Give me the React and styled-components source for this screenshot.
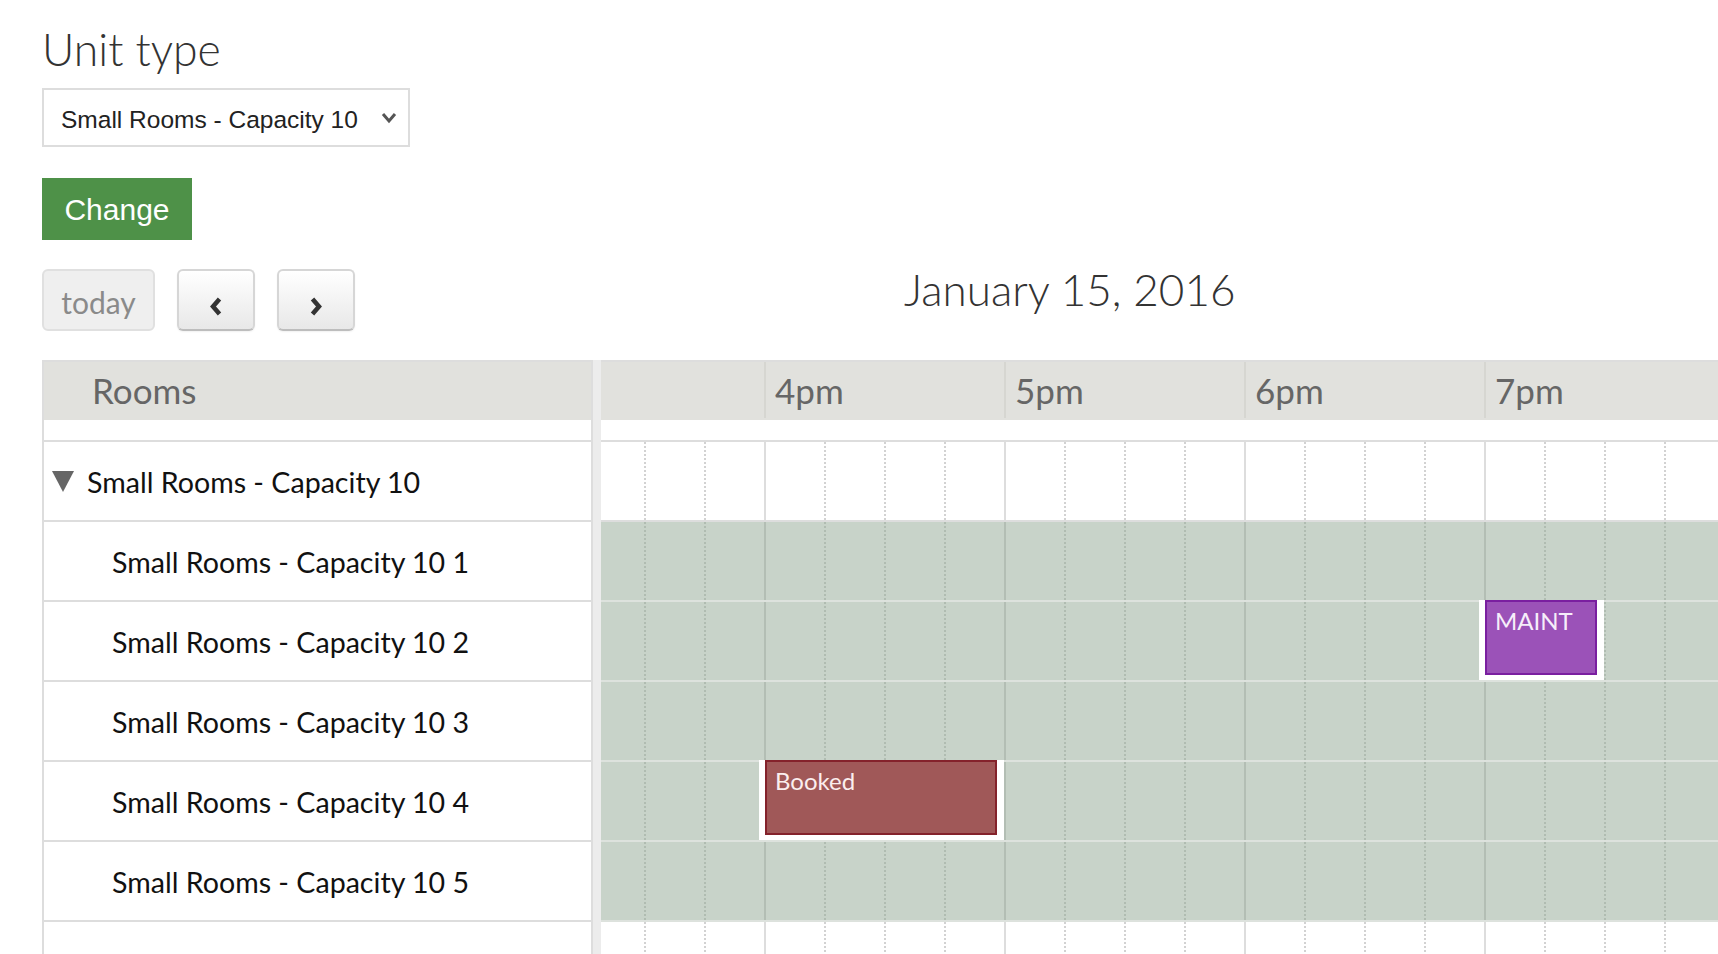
import React from "react";
import styled, { createGlobalStyle } from "styled-components";

const HOURS = [3, 4, 5, 6, 7, 8];
const LABELED = [4, 5, 6, 7];
const QUARTERS = [0, 1, 2, 3];
const HOUR_W = 240;
const TRACK_START = 15;

const ROOMS = [1, 2, 3, 4, 5].map((n) => `Small Rooms - Capacity 10 ${n}`);

const EVENTS = [
  { room: 2, title: "MAINT", start: 19, end: 19.5, kind: "maint" },
  { room: 4, title: "Booked", start: 16, end: 17, kind: "booked" },
];

const EVENT_COLORS = {
  maint: { bg: "#9b52b8", border: "#7a1fa0", text: "#f6eefa" },
  booked: { bg: "#a05858", border: "#84222b", text: "#fbeeee" },
};

export default function App() {
  return (
    <>
      <GlobalStyle />
      <Page>
        <Heading>Unit type</Heading>
        <Select>
          <span>Small Rooms - Capacity 10</span>
          <svg width="16" height="12" viewBox="0 0 16 12">
            <polyline points="2,2 8,9 14,2" fill="none" stroke="#555" strokeWidth="3" />
          </svg>
        </Select>
        <ChangeButton>Change</ChangeButton>

        <Toolbar>
          <ButtonGroup>
            <TodayButton>today</TodayButton>
            <NavButton>
              <svg width="12" height="19" viewBox="0 0 12 19">
                <polyline points="9.5,2 3,9.5 9.5,17" fill="none" stroke="#333" strokeWidth="4.5" />
              </svg>
            </NavButton>
            <NavButton>
              <svg width="12" height="19" viewBox="0 0 12 19">
                <polyline points="2.5,2 9,9.5 2.5,17" fill="none" stroke="#333" strokeWidth="4.5" />
              </svg>
            </NavButton>
          </ButtonGroup>
          <Title>January 15, 2016</Title>
        </Toolbar>

        <Scheduler>
          <RoomsPane>
            <RoomsHeader>Rooms</RoomsHeader>
            <Spacer />
            <GroupRow>
              <svg width="22" height="21" viewBox="0 0 22 21">
                <polygon points="0,0 22,0 11,21" fill="#666" />
              </svg>
              Small Rooms - Capacity 10
            </GroupRow>
            {ROOMS.map((r) => (
              <RoomRow key={r}>{r}</RoomRow>
            ))}
            <RoomRow />
          </RoomsPane>

          <Divider />

          <TimePane>
            <Track>
              <TimeHeader>
                {HOURS.map((h) => (
                  <HourCell key={h}>{LABELED.includes(h) ? `${h}pm` : ""}</HourCell>
                ))}
              </TimeHeader>
              <Spacer />
              <TimeRow>
                <Slots />
              </TimeRow>
              {ROOMS.map((r, i) => (
                <TimeRow key={r} $shaded>
                  <Slots shaded />
                  {EVENTS.filter((e) => e.room === i + 1).map((e) => (
                    <Harness
                      key={e.title}
                      style={{
                        left: (e.start - TRACK_START) * HOUR_W - 5,
                        width: (e.end - e.start) * HOUR_W + 5,
                      }}
                    >
                      <Event $kind={e.kind}>{e.title}</Event>
                    </Harness>
                  ))}
                </TimeRow>
              ))}
              <TimeRow>
                <Slots />
              </TimeRow>
            </Track>
          </TimePane>
        </Scheduler>
      </Page>
    </>
  );
}

function Slots({ shaded }) {
  return HOURS.map((h) =>
    QUARTERS.map((q) => <Slot key={`${h}-${q}`} $hour={q === 0} $shaded={shaded} />)
  );
}

const GlobalStyle = createGlobalStyle`
  html, body {
    margin: 0;
    padding: 0;
    background: #fff;
    overflow: hidden;
  }
  body {
    font-family: Lato, "Open Sans", sans-serif;
    color: #333;
  }
`;

const Page = styled.div`
  width: 1718px;
  height: 954px;
  overflow: hidden;
  box-sizing: border-box;
  padding: 21px 0 0 42px;
`;

const Heading = styled.h2`
  margin: 0;
  font-size: 44.5px;
  font-weight: 300;
  line-height: 55px;
  color: #333;
`;

const Select = styled.div`
  margin-top: 12px;
  width: 368px;
  height: 59px;
  box-sizing: border-box;
  border: 2px solid #ddd;
  display: flex;
  align-items: center;
  justify-content: space-between;
  padding: 5px 11px 0 17px;
  font-family: "Liberation Sans", Arial, sans-serif;
  font-size: 24.5px;
  color: #222;

  svg {
    margin-top: -5px;
  }
`;

const ChangeButton = styled.button`
  margin-top: 31px;
  display: block;
  width: 150px;
  height: 62px;
  border: none;
  border-radius: 0;
  background: #4e9148;
  color: #fff;
  font-family: "Liberation Sans", Arial, sans-serif;
  font-size: 30px;
  padding: 2px 0 0;
`;

const Toolbar = styled.div`
  margin-top: 29px;
  height: 62px;
  display: flex;
  align-items: flex-start;
`;

const ButtonGroup = styled.div`
  display: flex;
  gap: 22px;
`;

const BaseButton = styled.button`
  height: 62px;
  box-sizing: border-box;
  border-radius: 6px;
  padding: 0;
  font-family: Lato, sans-serif;
`;

const TodayButton = styled(BaseButton)`
  width: 113px;
  background: #efefef;
  border: 2px solid #e0e0e0;
  color: #8a8a8a;
  font-size: 30px;
  padding-top: 3px;
`;

const NavButton = styled(BaseButton)`
  width: 78px;
  background: linear-gradient(#fff, #e8e8e8);
  border: 2px solid #d6d6d6;
  border-bottom-color: #bdbdbd;
  box-shadow: 0 1px 2px rgba(0, 0, 0, 0.06);
  display: flex;
  justify-content: center;
  align-items: flex-start;
  padding-top: 26px;
`;

const Title = styled.h2`
  margin: -6px 0 0 549px;
  font-size: 44px;
  font-weight: 300;
  line-height: 53px;
  color: #333;
  white-space: nowrap;
`;

const Scheduler = styled.div`
  margin-top: 29px;
  display: flex;
  height: 640px;
`;

const RoomsPane = styled.div`
  width: 551px;
  flex: none;
  box-sizing: border-box;
  border-left: 2px solid #ddd;
  border-right: 2px solid #ddd;
`;

const Divider = styled.div`
  width: 8px;
  flex: none;
  background: #ececec;
`;

const TimePane = styled.div`
  flex: 1;
  min-width: 0;
  overflow: hidden;
`;

const Track = styled.div`
  width: ${HOURS.length * HOUR_W}px;
  margin-left: -77px;
`;

const HeaderBar = styled.div`
  height: 60px;
  box-sizing: border-box;
  border-top: 2px solid #ddd;
  background: #e1e1dd;
  color: #666;
  font-size: 35px;
  display: flex;
  align-items: center;
  padding-bottom: 2px;
`;

const RoomsHeader = styled(HeaderBar)`
  padding-left: 48px;
`;

const TimeHeader = styled(HeaderBar)`
  align-items: stretch;
`;

const HourCell = styled.div`
  width: ${HOUR_W}px;
  flex: none;
  box-sizing: border-box;
  border-left: 2px solid #d6d6d1;
  padding-left: 9px;
  display: flex;
  align-items: center;
`;

const Spacer = styled.div`
  height: 22px;
  box-sizing: border-box;
  border-bottom: 2px solid #ddd;
`;

const RoomRow = styled.div`
  height: 80px;
  box-sizing: border-box;
  border-bottom: 2px solid #ddd;
  display: flex;
  align-items: center;
  padding: 2px 0 0 68px;
  font-size: 28.6px;
  color: #111;
`;

const GroupRow = styled(RoomRow)`
  padding-left: 8px;
  gap: 13px;

  svg {
    margin-top: -2px;
  }
`;

const TimeRow = styled.div`
  position: relative;
  height: 80px;
  box-sizing: border-box;
  display: flex;
  background: ${({ $shaded }) => ($shaded ? "#c8d3c9" : "#fff")};
  border-bottom: 2px solid ${({ $shaded }) => ($shaded ? "#dde2dd" : "#ddd")};
`;

const Slot = styled.div`
  width: 60px;
  flex: none;
  box-sizing: border-box;
  border-left: 2px ${({ $hour }) => ($hour ? "solid" : "dotted")}
    ${({ $hour, $shaded }) =>
      $shaded ? ($hour ? "#b3beb4" : "#b0bcb1") : $hour ? "#ddd" : "#d2d2d2"};
`;

const Harness = styled.div`
  position: absolute;
  top: -2px;
  bottom: 0;
  background: #fff;
  box-sizing: border-box;
  padding: 0 7px 0 6px;
`;

const Event = styled.div`
  height: 75px;
  box-sizing: border-box;
  background: ${({ $kind }) => EVENT_COLORS[$kind].bg};
  border: 2px solid ${({ $kind }) => EVENT_COLORS[$kind].border};
  color: ${({ $kind }) => EVENT_COLORS[$kind].text};
  font-size: 24px;
  padding: 5px 8px 4px;
  line-height: 1.2;
`;
